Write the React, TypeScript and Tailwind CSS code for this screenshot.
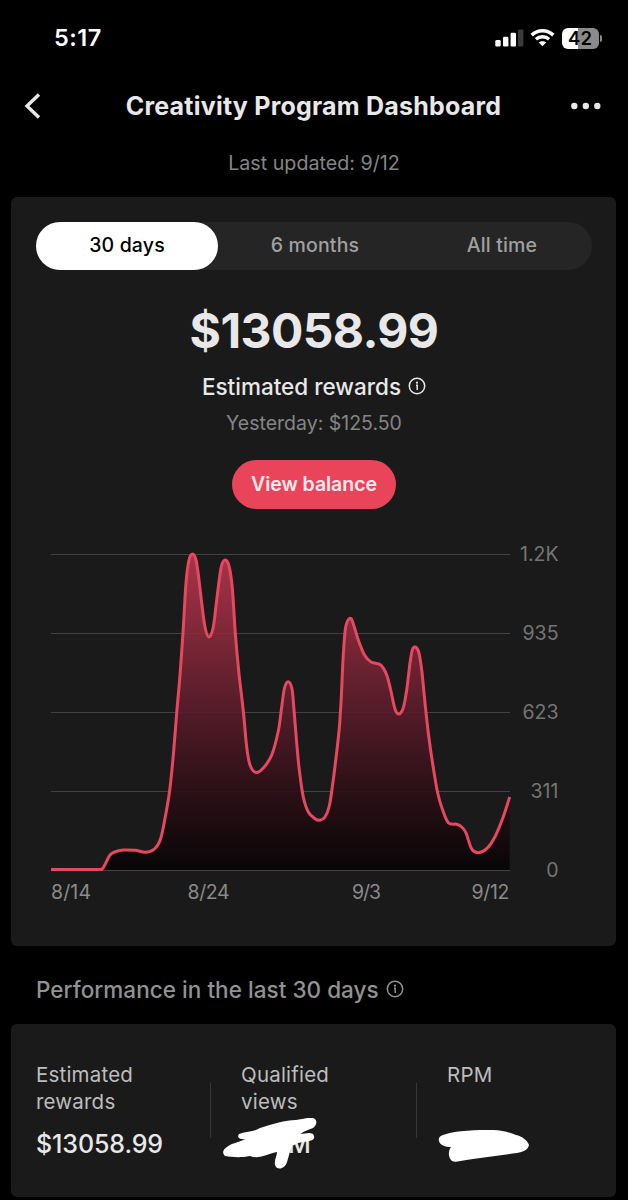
type Point = [number, number];

interface Metric {
  label: string;
  value: string;
}

const ranges = ['30 days', '6 months', 'All time'];

const gridLines = [
  { y: 554, label: '1.2K' },
  { y: 633, label: '935' },
  { y: 712, label: '623' },
  { y: 791, label: '311' },
  { y: 870, label: '0' },
];

const days = [
  { x: 51, label: '8/14', length: 40 },
  { x: 187.5, label: '8/24', length: 42 },
  { x: 352, label: '9/3', length: 29 },
  { x: 471.5, label: '9/12', length: 38 },
];

const metrics: Metric[] = [
  { label: 'Estimated rewards', value: '$13058.99' },
  { label: 'Qualified views', value: 'M' },
  { label: 'RPM', value: '' },
];

const points: Point[] = [
  [51, 869.5], [76, 869.5], [98, 869.5], [103, 868], [110, 855], [116, 851.5], [123.5, 850], [135, 850.3], [146, 852.3],
  [155, 848.5], [160.7, 838.5], [166, 813], [170, 788], [173.5, 753], [176.7, 713], [180, 675], [183.3, 628],
  [186, 583], [189, 560], [192.7, 554], [196, 560], [198.5, 576], [201.7, 603], [205, 627], [209, 637],
  [213.3, 627], [216.7, 600], [221, 568], [225, 560], [229, 566], [232.3, 588], [235.3, 633], [238.8, 672],
  [243.3, 711], [246.7, 747], [250, 765], [256, 772.5], [263.3, 768], [271.7, 755], [278.3, 731], [281.7, 707],
  [284.5, 688], [288.2, 681.7], [292, 689], [294, 710], [296.7, 743], [299.3, 770], [303.3, 797], [308.3, 812],
  [315, 818.7], [320, 820.3], [325, 817], [329.3, 806], [332.3, 787], [336, 758], [339.3, 728], [341.3, 697],
  [343, 660], [345, 632], [347.3, 621.5], [351, 618.5], [354.3, 627], [358.3, 640], [364.5, 655], [371, 662],
  [380.7, 665], [386.7, 675], [390.7, 690], [395, 709], [399, 714], [403.3, 707.7], [406.7, 690], [410, 663],
  [412.3, 650], [415.2, 647], [418.7, 652], [421.7, 670], [424.7, 700], [428.3, 733], [432.7, 764], [437.7, 793],
  [442.3, 809], [448.3, 822.7], [456.7, 824.3], [461.7, 827], [466, 833], [471.7, 849], [478.3, 852.7],
  [486.7, 848.7], [495, 836.7], [503.3, 816.7], [509.7, 797],
];

// Catmull-Rom spline through the points, written as cubic segments
function smooth(pts: Point[]) {
  let d = `M${pts[0][0]} ${pts[0][1]}`;
  for (let i = 0; i < pts.length - 1; i++) {
    const p0 = pts[i - 1] ?? pts[i];
    const p1 = pts[i];
    const p2 = pts[i + 1];
    const p3 = pts[i + 2] ?? p2;
    d += `C${p1[0] + (p2[0] - p0[0]) / 6} ${p1[1] + (p2[1] - p0[1]) / 6} ${p2[0] - (p3[0] - p1[0]) / 6} ${p2[1] - (p3[1] - p1[1]) / 6} ${p2[0]} ${p2[1]}`;
  }
  return d;
}

const line = smooth(points);

function InfoIcon() {
  return (
    <svg className="-mt-0.5" width="18" height="18" viewBox="0 0 18 18" fill="none">
      <circle cx="9" cy="9" r="7.7" stroke="currentColor" strokeWidth="1.5" />
      <circle cx="9" cy="5.7" r="1.1" fill="currentColor" />
      <path d="M8 8.2H9.2V13" stroke="currentColor" strokeWidth="1.5" />
    </svg>
  );
}

function StatusBar() {
  return (
    <div className="flex h-[76px] items-center justify-between pr-[26px] pl-[54px]">
      <span className="text-[23.5px] font-semibold tracking-[0.5px] text-white">5:17</span>
      <div className="flex items-center">
        <svg width="29" height="18" viewBox="0 0 29 18" fill="#fff">
          <rect x="0.3" y="11" width="5.4" height="6.6" rx="1.3" />
          <rect x="8" y="7.8" width="5.4" height="9.8" rx="1.3" />
          <rect x="15.6" y="3.8" width="5.4" height="13.8" rx="1.3" />
          <rect x="23" y="0.4" width="5.4" height="17.2" rx="1.3" fill="#3a3a3a" />
        </svg>
        <svg className="ml-[6px]" width="25" height="18" viewBox="0 0 25 18" fill="none" stroke="#fff">
          <path d="M1.7 6.1C7.8 0.4 17.2 0.4 23.3 6.1" strokeWidth="3.5" />
          <path d="M5.9 10.3C9.6 6.9 15.4 6.9 19.1 10.3" strokeWidth="3.3" />
          <path d="M12.5 17.2L8.8 13.5C10.9 11.7 14.1 11.7 16.2 13.5Z" fill="#fff" stroke="none" />
        </svg>
        <div className="ml-[7px] flex h-[21px] w-[37px] items-center justify-center rounded-[6px] bg-linear-to-r from-white from-42% to-[#8a8a8a] to-42%">
          <span className="text-[18.5px] font-semibold leading-none text-black">42</span>
        </div>
        <div className="ml-[1px] h-[7px] w-[2.5px] rounded-r-full bg-[#8a8a8a]" />
      </div>
    </div>
  );
}

function RewardsChart() {
  return (
    <svg className="mt-[31px] block" width="556" height="370" viewBox="36 540 556 370">
      <defs>
        <linearGradient id="area" x1="0" y1="554" x2="0" y2="870" gradientUnits="userSpaceOnUse">
          <stop offset="0" stopColor="#bd374f" />
          <stop offset="0.25" stopColor="#8c2a3c" />
          <stop offset="0.5" stopColor="#5a1b29" />
          <stop offset="0.75" stopColor="#2d0f16" />
          <stop offset="1" stopColor="#050304" />
        </linearGradient>
      </defs>
      {gridLines.map((g) => (
        <g key={g.label}>
          <path d={`M51 ${g.y + 0.5}H510`} stroke="#414141" strokeWidth="1.2" />
          <text x="558.5" y={g.y + 6.5} textAnchor="end" fontSize="19.5" fill="#757575">{g.label}</text>
        </g>
      ))}
      <path d={`${line}V870H51Z`} fill="url(#area)" fillOpacity="0.88" />
      <path d={line} fill="none" stroke="#e5485f" strokeWidth="3" />
      {days.map((d) => (
        <text key={d.label} x={d.x} y="898.5" textLength={d.length} fontSize="19.5" fill="#8a8a8a">{d.label}</text>
      ))}
    </svg>
  );
}

export default function App() {
  return (
    <div className="flex h-[1200px] w-[628px] flex-col overflow-hidden bg-black font-['Inter',sans-serif] text-[#e8e8e8]">
      <StatusBar />
      <header className="flex h-[60px] items-center justify-between pr-[27px] pl-6">
        <svg width="18" height="28" viewBox="0 0 18 28" fill="none" stroke="currentColor" strokeWidth="3.4">
          <path d="M15 2.5L3 14L15 25.5" />
        </svg>
        <h1 className="mt-px ml-[14px] text-[25px] font-bold tracking-[0.22px] whitespace-nowrap">Creativity Program Dashboard</h1>
        <svg width="30" height="8" viewBox="0 0 30 8" fill="currentColor">
          <circle cx="3.3" cy="4" r="3.2" />
          <circle cx="14.8" cy="4" r="3.2" />
          <circle cx="26.3" cy="4" r="3.2" />
        </svg>
      </header>
      <p className="mt-[12px] text-center text-[19.7px] leading-[30px] text-[#858585]">Last updated: 9/12</p>

      <main className="mr-3 ml-[11px] mt-[19px] flex h-[749px] shrink-0 flex-col rounded-[6px] bg-[#1a1a1a] pt-[25px] pl-[25px]">
        <div className="flex w-[556px] flex-col items-center">
          <div className="flex h-12 w-full rounded-full bg-[#252525]">
            {ranges.map((r, i) => (
              <button
                key={r}
                className={`text-[19.5px] font-medium tracking-[0.15px] ${i === 0 ? 'w-[182px] rounded-full bg-white text-black' : 'flex-1 pl-[7px] text-[#a0a0a0]'}`}
              >
                {r}
              </button>
            ))}
          </div>
          <div className="mt-[36px] text-[48px] leading-[50px] font-bold tracking-[-0.6px]">$13058.99</div>
          <div className="mt-[15px] flex items-center gap-[7px] leading-[32px]">
            <span className="text-[22.5px] font-medium">Estimated rewards</span>
            <InfoIcon />
          </div>
          <div className="mt-[5px] text-[19.5px] leading-[30px] text-[#858585]">Yesterday: $125.50</div>
          <button className="mt-[22px] h-[49px] w-[164px] rounded-full bg-[#ea445a] text-[19.5px] font-semibold tracking-[-0.05px] text-[#fbe9ec]">
            View balance
          </button>
          <RewardsChart />
        </div>
      </main>

      <div className="mt-[28px] flex h-8 shrink-0 items-center gap-[7px] pl-9 text-[#929292]">
        <h2 className="text-[22.5px] font-medium tracking-[0.04px]">Performance in the last 30 days</h2>
        <InfoIcon />
      </div>

      <section className="relative mr-3 ml-[11px] mt-[18px] flex h-[173px] shrink-0 rounded-[6px] bg-[#1a1a1a] pl-[25px]">
        {metrics.map((m, i) => (
          <div key={m.label} className={`relative flex shrink-0 flex-col pt-[37px] ${i === 0 ? 'w-[174px]' : 'w-[206px] pl-[31px]'}`}>
            {i > 0 && <div className="absolute top-[59px] left-0 h-[55px] w-px bg-[#373737]" />}
            <div className="h-[54px] w-[110px] text-[20.5px] leading-[27px] tracking-[0.2px] text-[#bdbdbd]">{m.label}</div>
            <div className={`mt-[13px] text-[25px] leading-[32px] font-medium tracking-[-0.1px] ${i === 1 ? 'pl-[47px]' : ''}`}>{m.value}</div>
          </div>
        ))}
        {/* marker strokes hiding the private numbers */}
        <svg className="absolute top-[94px] left-[207px]" width="320" height="55" viewBox="218 1118 320 55" fill="#fff">
          <path d="M239 1134C248 1131 254 1132 260 1128C273 1124 285 1120 296 1120C303 1119 309 1117 313 1118C318 1120 317 1125 313 1128C308 1130 302 1132 301 1134C305 1134 309 1132 313 1134C316 1138 313 1141 309 1141L298 1143L292 1146C290 1150 289 1156 287 1162C285 1169 277 1171 275 1165C274 1160 277 1156 277 1152C269 1153 259 1160 250 1156C240 1158 232 1157 225 1156C220 1151 226 1147 232 1144C237 1142 242 1141 246 1139C241 1140 236 1138 239 1134Z" />
          <path d="M443 1135C458 1130 476 1130 493 1130C503 1130 510 1133 516 1135C522 1136 528 1141 529 1145C528 1150 523 1152 517 1153C503 1155 487 1157 473 1159C464 1160 456 1163 452 1161C448 1158 448 1151 451 1147C445 1147 440 1145 439 1141C438 1138 440 1136 443 1135Z" />
        </svg>
      </section>
    </div>
  );
}
